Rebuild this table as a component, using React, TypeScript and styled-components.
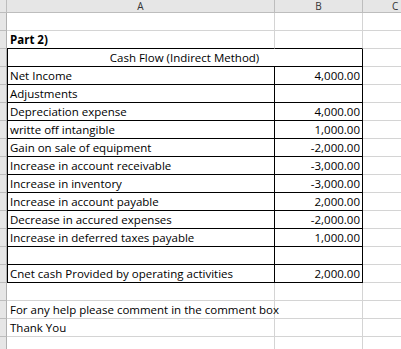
import React from "react";
import styled, { createGlobalStyle, css } from "styled-components";

const Global = createGlobalStyle`
  html, body { margin: 0; padding: 0; background: #ffffff; }
  body { font-family: "Open Sans", "Noto Sans", sans-serif; }
`;

const GRID = "#d4d4d4";
const HEAD_LINE = "#bdbdbd";
const HEAD_BG = "#e6e6e6";

const Sheet = styled.div`
  display: grid;
  grid-template-columns: 7px 268px 88px 60px;
  grid-template-rows: 13px;
  grid-auto-rows: 18px;
  width: 401px;
  height: 349px;
  overflow: hidden;
  font-size: 11.5px;
  color: #000;
`;

const ColHead = styled.div<{ $last?: boolean }>`
  box-sizing: border-box;
  background: ${HEAD_BG};
  border-bottom: 1px solid ${HEAD_LINE};
  border-right: 1px solid ${(p) => (p.$last ? HEAD_BG : HEAD_LINE)};
  display: flex;
  align-items: center;
  justify-content: center;
  font-size: 10px;
  line-height: 12px;
  color: #333;
`;

const ColHeadC = styled(ColHead)`
  justify-content: flex-start;
  padding-left: 29px;
`;

const Corner = styled.div`
  box-sizing: border-box;
  background: ${HEAD_BG};
  border-bottom: 1px solid ${HEAD_LINE};
  border-right: 1px solid ${HEAD_LINE};
`;

const RowHead = styled.div`
  box-sizing: border-box;
  background: ${HEAD_BG};
  border-bottom: 1px solid ${HEAD_LINE};
  border-right: 1px solid #b0b0b0;
`;

const Cell = styled.div<{
  $rb?: boolean;
  $bb?: boolean;
  $lb?: boolean;
  $align?: "left" | "right" | "center";
  $bold?: boolean;
  $span?: number;
}>`
  box-sizing: border-box;
  display: flex;
  align-items: flex-end;
  justify-content: ${(p) =>
    p.$align === "right" ? "flex-end" : p.$align === "center" ? "center" : "flex-start"};
  padding: 0 2px 1px 3px;
  border-right: 1px solid ${(p) => (p.$rb ? "#000" : GRID)};
  border-bottom: 1px solid ${(p) => (p.$bb ? "#000" : GRID)};
  font-weight: ${(p) => (p.$bold ? 700 : 400)};
  white-space: nowrap;
  line-height: 15px;
  ${(p) => p.$span && css`grid-column: span ${p.$span};`}
  ${(p) => p.$lb && css`box-shadow: inset 1px 0 0 #000;`}
  ${(p) => p.$align === "center" && css`padding-left: 0; padding-right: 0;`}
`;

const items: [string, string][] = [
  ["Net Income", "4,000.00"],
  ["Adjustments", ""],
  ["Depreciation expense", "4,000.00"],
  ["writte off intangible", "1,000.00"],
  ["Gain on sale of equipment", "-2,000.00"],
  ["Increase in account receivable", "-3,000.00"],
  ["Increase in inventory", "-3,000.00"],
  ["Increase in account payable", "2,000.00"],
  ["Decrease in accured expenses", "-2,000.00"],
  ["Increase in deferred taxes payable", "1,000.00"],
  ["", ""],
  ["Cnet cash Provided by operating activities", "2,000.00"],
];

export default function App() {
  return (
    <>
      <Global />
      <Sheet>
        <Corner />
        <ColHead>A</ColHead>
        <ColHead>B</ColHead>
        <ColHeadC $last>C</ColHeadC>

        <RowHead />
        <Cell />
        <Cell />
        <Cell />

        <RowHead />
        <Cell $bold $bb>Part 2)</Cell>
        <Cell $bb />
        <Cell />

        <RowHead />
        <Cell $span={2} $align="center" $lb $rb $bb>
          Cash Flow (Indirect Method)
        </Cell>
        <Cell />

        {items.map(([label, value], i) => (
          <React.Fragment key={i}>
            <RowHead />
            <Cell $lb $rb $bb>{label}</Cell>
            <Cell $align="right" $rb $bb>{value}</Cell>
            <Cell />
          </React.Fragment>
        ))}

        <RowHead />
        <Cell />
        <Cell />
        <Cell />

        <RowHead />
        <Cell>For any help please comment in the comment box</Cell>
        <Cell />
        <Cell />

        <RowHead />
        <Cell>Thank You</Cell>
        <Cell />
        <Cell />

        <RowHead />
        <Cell />
        <Cell />
        <Cell />
      </Sheet>
    </>
  );
}
